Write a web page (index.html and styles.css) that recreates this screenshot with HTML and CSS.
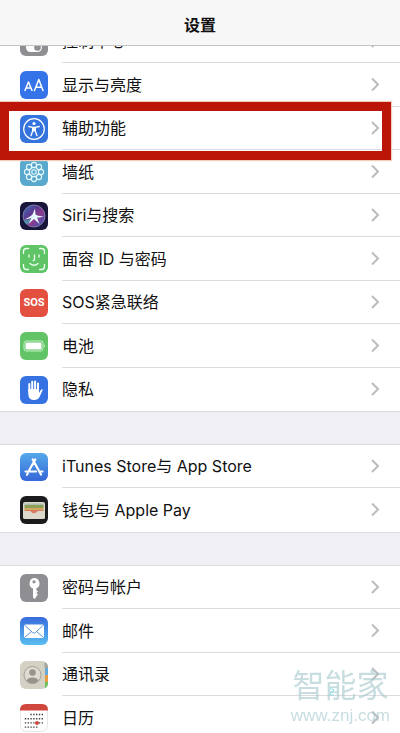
FILE: index.html
```
<!DOCTYPE html>
<html lang="zh-CN">
<head>
  <meta charset="UTF-8" />
  <meta name="viewport" content="width=device-width, initial-scale=1.0"/>
  <title>设置</title>
  <link rel="stylesheet" href="styles.css">
</head>
<body>

  <header class="navbar">
    <h1>设置</h1>
  </header>

  <main class="settings">
    <ul class="group">
      <li>
        <a class="row" href="#control">
          <svg class="icon" viewBox="0 0 28 28">
            <rect width="28" height="28" rx="6" fill="#8e8e93"/>
            <rect x="6" y="5" width="16" height="8" rx="4" fill="none" stroke="#fff" stroke-width="1.5"/>
            <rect x="6" y="15" width="16" height="9" rx="4.5" fill="#fff"/>
            <circle cx="17.500" cy="19.500" r="3.300" fill="#8e8e93"/>
          </svg>
          <span class="label">控制中心</span>
          <svg class="chevron" viewBox="0 0 8 14"><path d="M1 1l6 6-6 6"/></svg>
        </a>
      </li>
      <li>
        <a class="row" href="#display">
          <svg class="icon" viewBox="0 0 28 28">
            <rect width="28" height="28" rx="6" fill="#3574e8"/>
            <g fill="none" stroke="#fff" stroke-width="1.5" stroke-linecap="round" stroke-linejoin="round">
              <path d="M5 19.500l3.500-8.500 3.500 8.500M6.200 17h4.600"/>
              <path d="M14.500 19.500l4.300-11L23 19.500M16 16.200h5.500"/>
            </g>
          </svg>
          <span class="label">显示与亮度</span>
          <svg class="chevron" viewBox="0 0 8 14"><path d="M1 1l6 6-6 6"/></svg>
        </a>
      </li>
      <li class="marked">
        <a class="row" href="#accessibility">
          <svg class="icon" viewBox="0 0 28 28">
            <rect width="28" height="28" rx="6" fill="#3574dd"/>
            <circle cx="14" cy="14" r="10.300" fill="none" stroke="#fff" stroke-width="1.200"/>
            <circle cx="14" cy="8.500" r="1.600" fill="#fff"/>
            <path d="M8.700 11.500l4 .8v3.700L11 20.700M19.300 11.500l-4 .8v3.700l1.700 4.700" fill="none" stroke="#fff" stroke-width="1.300" stroke-linecap="round" stroke-linejoin="round"/>
            <path d="M12.200 11.700h3.600v4.800h-3.600z" fill="#fff"/>
          </svg>
          <span class="label">辅助功能</span>
          <svg class="chevron" viewBox="0 0 8 14"><path d="M1 1l6 6-6 6"/></svg>
        </a>
      </li>
      <li>
        <a class="row" href="#wallpaper">
          <svg class="icon" viewBox="0 0 28 28">
            <rect width="28" height="28" rx="6" fill="#58a9cd"/>
            <g fill="none" stroke="#e6f8fb" stroke-width="1.100">
              <circle cx="14" cy="14" r="2.200"/>
              <circle cx="14" cy="7" r="2.600"/>
              <circle cx="19" cy="9" r="2.600"/>
              <circle cx="21" cy="14" r="2.600"/>
              <circle cx="19" cy="19" r="2.600"/>
              <circle cx="14" cy="21" r="2.600"/>
              <circle cx="9" cy="19" r="2.600"/>
              <circle cx="7" cy="14" r="2.600"/>
              <circle cx="9" cy="9" r="2.600"/>
              <circle cx="14" cy="14" r="4.600" stroke-dasharray="2.400 1.200"/>
            </g>
          </svg>
          <span class="label">墙纸</span>
          <svg class="chevron" viewBox="0 0 8 14"><path d="M1 1l6 6-6 6"/></svg>
        </a>
      </li>
      <li>
        <a class="row" href="#siri">
          <svg class="icon" viewBox="0 0 28 28">
            <defs>
              <linearGradient id="siri" x1="0" y1="0" x2="1" y2="1">
                <stop offset="0" stop-color="#2f7fb8"/>
                <stop offset=".35" stop-color="#5a3a92"/>
                <stop offset=".6" stop-color="#8d3a8a"/>
                <stop offset="1" stop-color="#2b62c4"/>
              </linearGradient>
            </defs>
            <rect width="28" height="28" rx="6" fill="#17163a"/>
            <circle cx="14" cy="14" r="11" fill="url(#siri)" stroke="#8a86b4" stroke-width=".8"/>
            <path d="M4 18c3 .5 6-.5 8-2l-4.500 6.500C5.500 21.500 4.300 20 4 18z" fill="#37c5c0" opacity=".6"/>
            <path d="M4 17.500c3.500-1.300 6.500-3 8.500-5L15 6.500l.5 6c2.500 1.700 5.500 2 8.500 1.500-3 1.500-5.500 1.700-7 1.500L19.500 22 14 17l-5.500 5 3-6.200c-2.500 1.200-5 1.700-7.500 1.700z" fill="#e6fbff"/>
          </svg>
          <span class="label">Siri与搜索</span>
          <svg class="chevron" viewBox="0 0 8 14"><path d="M1 1l6 6-6 6"/></svg>
        </a>
      </li>
      <li>
        <a class="row" href="#faceid">
          <svg class="icon" viewBox="0 0 28 28">
            <rect width="28" height="28" rx="6" fill="#5ec466"/>
            <g fill="none" stroke="#effff0" stroke-width="1.300" stroke-linecap="round" stroke-linejoin="round">
              <path d="M3.500 8.500v-2a3 3 0 0 1 3-3h2M19.500 3.500h2a3 3 0 0 1 3 3v2M24.500 19.500v2a3 3 0 0 1-3 3h-2M8.500 24.500h-2a3 3 0 0 1-3-3v-2"/>
              <path d="M9 10v2M19 10v2M14.500 10v4.500q0 1-1.300 1M10 18.500q4 3.500 8 0"/>
            </g>
          </svg>
          <span class="label">面容 ID 与密码</span>
          <svg class="chevron" viewBox="0 0 8 14"><path d="M1 1l6 6-6 6"/></svg>
        </a>
      </li>
      <li>
        <a class="row" href="#sos">
          <span class="icon icon-sos">SOS</span>
          <span class="label">SOS紧急联络</span>
          <svg class="chevron" viewBox="0 0 8 14"><path d="M1 1l6 6-6 6"/></svg>
        </a>
      </li>
      <li>
        <a class="row" href="#battery">
          <svg class="icon" viewBox="0 0 28 28">
            <rect width="28" height="28" rx="6" fill="#62c466"/>
            <rect x="4" y="9" width="19" height="10" rx="2.500" fill="none" stroke="#e4ffe4" stroke-width=".8"/>
            <rect x="5.500" y="10.500" width="16" height="7" rx="1.200" fill="#fff"/>
            <path d="M24.200 12.500q1.800 1.500 0 3z" fill="#e4ffe4"/>
          </svg>
          <span class="label">电池</span>
          <svg class="chevron" viewBox="0 0 8 14"><path d="M1 1l6 6-6 6"/></svg>
        </a>
      </li>
      <li>
        <a class="row" href="#privacy">
          <svg class="icon" viewBox="0 0 28 28">
            <rect width="28" height="28" rx="6" fill="#3672e2"/>
            <g fill="none" stroke="#fff" stroke-width="2" stroke-linecap="round">
              <path d="M9.300 15V8M12.200 14V5.700M15.100 14V5.500M18 15V7.500"/>
            </g>
            <path d="M8.300 13H19v4l1.800-3q1.200-1.400 2-.3l-3.300 7.300q-1.500 3-5.200 3-5.900 0-6-6z" fill="#fff"/>
          </svg>
          <span class="label">隐私</span>
          <svg class="chevron" viewBox="0 0 8 14"><path d="M1 1l6 6-6 6"/></svg>
        </a>
      </li>
    </ul>

    <ul class="group">
      <li>
        <a class="row" href="#store">
          <svg class="icon" viewBox="0 0 28 28">
            <defs>
              <linearGradient id="store" x1="0" y1="0" x2="0" y2="1">
                <stop offset="0" stop-color="#55a9ea"/>
                <stop offset="1" stop-color="#3567d8"/>
              </linearGradient>
            </defs>
            <rect width="28" height="28" rx="6" fill="url(#store)"/>
            <g fill="none" stroke="#fff" stroke-width="2.200" stroke-linecap="round">
              <path d="M15.300 6.500L9 17.500M12.700 6.500L21 21.500M5.500 18.500h10.500M19.500 18.500h3M7.700 20.500l-.7 1.200"/>
            </g>
          </svg>
          <span class="label">iTunes Store与 App Store</span>
          <svg class="chevron" viewBox="0 0 8 14"><path d="M1 1l6 6-6 6"/></svg>
        </a>
      </li>
      <li>
        <a class="row" href="#wallet">
          <svg class="icon" viewBox="0 0 28 28">
            <rect width="28" height="28" rx="6" fill="#1b1a1c"/>
            <rect x="3" y="6" width="22" height="17" rx="2" fill="#dcd8cc"/>
            <path d="M4.500 7.500h19V10h-19z" fill="#a9c0b4"/>
            <path d="M4.500 9h19v3.500h-19z" fill="#8f9f55"/>
            <path d="M4.500 12h19v2.500h-19z" fill="#d0a862"/>
            <path d="M4.500 14h19v4h-19z" fill="#d9795c"/>
            <path d="M3 15h6.500q1.500 0 2 1.200 2.500 2.300 5 0 .5-1.200 2-1.200H25v6q0 2-2 2H5q-2 0-2-2z" fill="#dcd8cc"/>
          </svg>
          <span class="label">钱包与 Apple Pay</span>
          <svg class="chevron" viewBox="0 0 8 14"><path d="M1 1l6 6-6 6"/></svg>
        </a>
      </li>
    </ul>

    <ul class="group">
      <li>
        <a class="row" href="#passwords">
          <svg class="icon" viewBox="0 0 28 28">
            <rect width="28" height="28" rx="6" fill="#8e8e93"/>
            <path fill-rule="evenodd" d="M14 4a5.500 5.500 0 0 1 2.300 10.500V16l1.700 1.500-1.700 1.500 1.700 1.700-1.700 1.500v1L14.500 25 13 23.500v-9A5.500 5.500 0 0 1 14 4zm0 2.200a1.600 1.600 0 1 0 0 3.200 1.600 1.600 0 0 0 0-3.200z" fill="#fff"/>
          </svg>
          <span class="label">密码与帐户</span>
          <svg class="chevron" viewBox="0 0 8 14"><path d="M1 1l6 6-6 6"/></svg>
        </a>
      </li>
      <li>
        <a class="row" href="#mail">
          <svg class="icon" viewBox="0 0 28 28">
            <defs>
              <linearGradient id="mail" x1="0" y1="0" x2="0" y2="1">
                <stop offset="0" stop-color="#386bdb"/>
                <stop offset="1" stop-color="#59bdf0"/>
              </linearGradient>
            </defs>
            <rect width="28" height="28" rx="6" fill="url(#mail)"/>
            <rect x="4" y="7.500" width="20" height="13.500" rx="1.500" fill="#fff"/>
            <path d="M4.500 8l8 7.500q1.500 1.300 3 0l8-7.500M4.500 20.500l7-6M23.500 20.500l-7-6" fill="none" stroke="#5c93d8" stroke-width="1"/>
          </svg>
          <span class="label">邮件</span>
          <svg class="chevron" viewBox="0 0 8 14"><path d="M1 1l6 6-6 6"/></svg>
        </a>
      </li>
      <li>
        <a class="row" href="#contacts">
          <svg class="icon" viewBox="0 0 28 28">
            <rect width="28" height="28" rx="6" fill="#d3d0c4"/>
            <path d="M24.500 1.200Q28 2.500 28 6v1h-3.500z" fill="#a5a49c"/>
            <path d="M25 7h3v7h-3z" fill="#64a9da"/>
            <path d="M25 14h3v7h-3z" fill="#e79c43"/>
            <path d="M25 21h3v1q0 3.500-3 5z" fill="#6cbf60"/>
            <circle cx="12.500" cy="14" r="8.500" fill="#dedbd0" stroke="#96948d" stroke-width=".8"/>
            <circle cx="12.500" cy="11.500" r="3.300" fill="#96948d"/>
            <path d="M6.500 19.500q1.500-3 6-3t6 3q-2.500 3-6 3t-6-3z" fill="#96948d"/>
          </svg>
          <span class="label">通讯录</span>
          <svg class="chevron" viewBox="0 0 8 14"><path d="M1 1l6 6-6 6"/></svg>
        </a>
      </li>
      <li>
        <a class="row" href="#calendar">
          <svg class="icon" viewBox="0 0 28 28">
            <rect x=".5" y=".5" width="27" height="27" rx="6" fill="#fff" stroke="#e6e6e6"/>
            <path d="M0 6.500V6q0-6 6-6h16q6 0 6 6v.5z" fill="#d0483d"/>
            <g fill="none" stroke="#444" stroke-width="1.400" stroke-dasharray="1.400 1.400">
              <path d="M10.400 10.500h13M4.800 14.700h18.500M4.800 18.900h18.500M4.800 23.100h13"/>
            </g>
            <circle cx="17" cy="18.900" r="2" fill="#d0483d"/>
          </svg>
          <span class="label">日历</span>
          <svg class="chevron" viewBox="0 0 8 14"><path d="M1 1l6 6-6 6"/></svg>
        </a>
      </li>
    </ul>
  </main>

  <div class="watermark">
    <span class="watermark-name">智能家</span>
    <svg class="watermark-mark" viewBox="0 0 6 8"><path d="M1 1h3.500v2L1 5.500V7h4"/></svg>
    <span class="watermark-url">www.znj.com</span>
  </div>

</body>
</html>
```
FILE: styles.css
```
* {
  box-sizing: border-box;
}
body {
  margin: 0;
  font-family: Inter, "Noto Sans CJK SC", sans-serif;
  font-size: 16px;
  background: #efeff4;
  color: #111;
}
.navbar {
  position: sticky;
  top: 0;
  z-index: 2;
  height: 46px;
  padding-top: 2px;
  display: flex;
  align-items: center;
  justify-content: center;
  background: #f7f7f8;
  border-bottom: 1px solid #c4c4c6;
}
.navbar h1 {
  margin: 0;
  font-size: 16px;
  font-weight: 600;
}
.settings {
  display: flex;
  flex-direction: column;
  gap: 32px;
  /* first row is scrolled halfway under the bar */
  margin-top: -27px;
}
.group {
  list-style: none;
  margin: 0;
  padding: 0;
  background: #fff;
  border-top: 1px solid #dcdce0;
  border-bottom: 1px solid #dcdce0;
}
.row {
  display: flex;
  align-items: center;
  height: 43px;
  padding-left: 20px;
  color: inherit;
  text-decoration: none;
}
.group li:nth-child(even) .row {
  height: 44px;
}
.icon {
  width: 28px;
  height: 28px;
  flex: none;
  margin-right: 14px;
}
.icon-sos {
  display: flex;
  align-items: center;
  justify-content: center;
  border-radius: 6px;
  background: #e4503f;
  color: #fff;
  font-family: Roboto, sans-serif;
  font-size: 11px;
  font-weight: 700;
}
.label {
  flex: 1;
  align-self: stretch;
  display: flex;
  align-items: center;
  padding-bottom: 2px;
  border-bottom: 1px solid #dcdce0;
  white-space: pre;
}
.chevron {
  box-sizing: content-box;
  align-self: stretch;
  width: 8px;
  padding-right: 21px;
  height: auto;
  border-bottom: 1px solid #dcdce0;
  fill: none;
  stroke: #bcbcc0;
  stroke-width: 2;
}
.group li:last-child .label,
.group li:last-child .chevron {
  border-bottom-color: transparent;
}
.marked {
  position: relative;
}
.marked::after {
  content: "";
  position: absolute;
  top: -5px;
  right: 9px;
  bottom: -10px;
  left: 0;
  z-index: 1;
  border: 9px solid #bb1507;
  box-shadow: 0 0 1px 1px #f3cdbb;
  pointer-events: none;
}
.watermark {
  position: fixed;
  right: 10px;
  bottom: 7px;
  display: flex;
  flex-direction: column;
  align-items: center;
  color: #a3c6cc;
  opacity: 0.6;
  pointer-events: none;
}
.watermark-name {
  font-size: 32px;
  line-height: 40px;
}
.watermark-mark {
  position: absolute;
  top: 22px;
  left: 38px;
  width: 6px;
  height: 8px;
  fill: none;
  stroke: #3fd0dc;
}
.watermark-url {
  font-family: "Liberation Sans", sans-serif;
  font-size: 17px;
  line-height: 20px;
}
```
